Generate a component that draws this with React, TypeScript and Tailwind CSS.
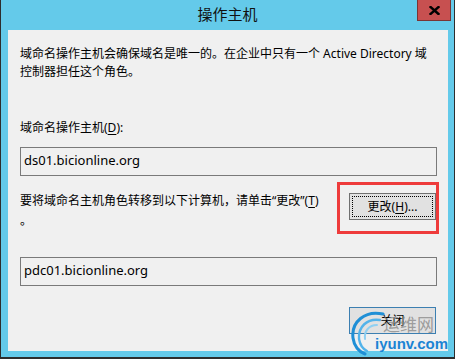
import React from "react";

const cjk = "font-['Microsoft_YaHei','Noto_Sans','Noto_Sans_CJK_SC',sans-serif]";

function CloseGlyph() {
  return (
    <svg width="11" height="9" viewBox="0 0 11 9">
      <path d="M1.5 1 L9.5 8 M9.5 1 L1.5 8" stroke="#000" strokeWidth="2.4" strokeLinecap="square" />
    </svg>
  );
}

function Watermark() {
  return (
    <div className="pointer-events-none absolute left-[-2px] top-[3px] h-[46px] w-[100px]">
      <svg className="absolute left-0 top-0" width="40" height="46" viewBox="0 0 40 46">
        <path d="M36 4 C18 0 4 12 6 28 C7 36 12 42 18 44" stroke="#1f8fd6" strokeWidth="3" fill="none" strokeLinecap="round" />
        <path d="M33 10 C20 8 11 17 12 29 C13 35 16 39 20 41" stroke="#52b3ea" strokeWidth="2.4" fill="none" strokeLinecap="round" />
        <path d="M30 15 C22 15 17 21 18 29" stroke="#8fd0f2" strokeWidth="2" fill="none" strokeLinecap="round" />
      </svg>
      <span className={`absolute left-[36px] top-[6px] text-[17px] leading-[18px] text-[#8a8a8a]/80 ${cjk}`}>运维网</span>
      <span className="absolute left-[28px] top-[25px] font-['Liberation_Sans',sans-serif] text-[15px] font-bold leading-[18px] text-[#1b84d4]">iyunv.com</span>
    </div>
  );
}

export default function App() {
  return (
    <div className={`flex h-[359px] w-[455px] flex-col border-x border-b-2 border-[#2d2d2d] bg-[#64caea] text-[12px] text-black ${cjk}`}>
      <div className="relative flex h-[30px] shrink-0 items-start justify-center">
        <span className="mt-[4px] text-[15px] leading-[20px] text-[#111]">操作主机</span>
        <button className="absolute right-[3px] top-0 flex h-[21px] w-[34px] items-center justify-center border border-t-0 border-[#7a3434] bg-[#c75050]">
          <CloseGlyph />
        </button>
      </div>
      <div className="ml-[7px] mr-[6px] flex flex-col bg-[#f0f0f0] pb-[17px] pl-[12px] pr-[11px] pt-[15px]">
        <p className="leading-[18px]">
          域命名操作主机会确保域名是唯一的。在企业中只有一个 Active Directory 域
          <br />
          控制器担任这个角色。
        </p>
        <label className="mt-[38px] leading-[18px]">
          域命名操作主机(<span className="underline underline-offset-2">D</span>):
        </label>
        <div className="mt-[10px] h-[29px] border border-[#7a7a7a] px-[3px] pt-[3px] text-[13px] leading-[18px]">
          ds01.bicionline.org
        </div>
        <div className="mt-[15px] flex items-start justify-between">
          <p className="leading-[20px]">
            要将域命名主机角色转移到以下计算机，请单击“更改”(<span className="underline underline-offset-2">T</span>)
            <br />。
          </p>
          <div className="relative mr-[1px] mt-[2px]">
            <button className="flex h-[27px] w-[87px] items-center justify-center border border-[#707070] bg-[#e1e1e1] p-[2px]">
              <span className="flex h-full w-full items-center justify-center border border-dotted border-black leading-none">
                更改(<span className="underline underline-offset-2">H</span>)...
              </span>
            </button>
            <div className="pointer-events-none absolute left-[-12px] top-[-11px] h-[52px] w-[102px] border-[3px] border-[#ee3b3b]" />
          </div>
        </div>
        <div className="mt-[26px] h-[29px] border border-[#7a7a7a] px-[3px] pt-[3px] text-[13px] leading-[18px]">
          pdc01.bicionline.org
        </div>
        <div className="mt-[21px] flex justify-end">
          <div className="relative mr-[1px]">
            <button className="flex h-[27px] w-[87px] items-center justify-center border border-[#3c7fb1] bg-[#e1e1e1] leading-none">
              关闭
            </button>
            <Watermark />
          </div>
        </div>
      </div>
    </div>
  );
}
